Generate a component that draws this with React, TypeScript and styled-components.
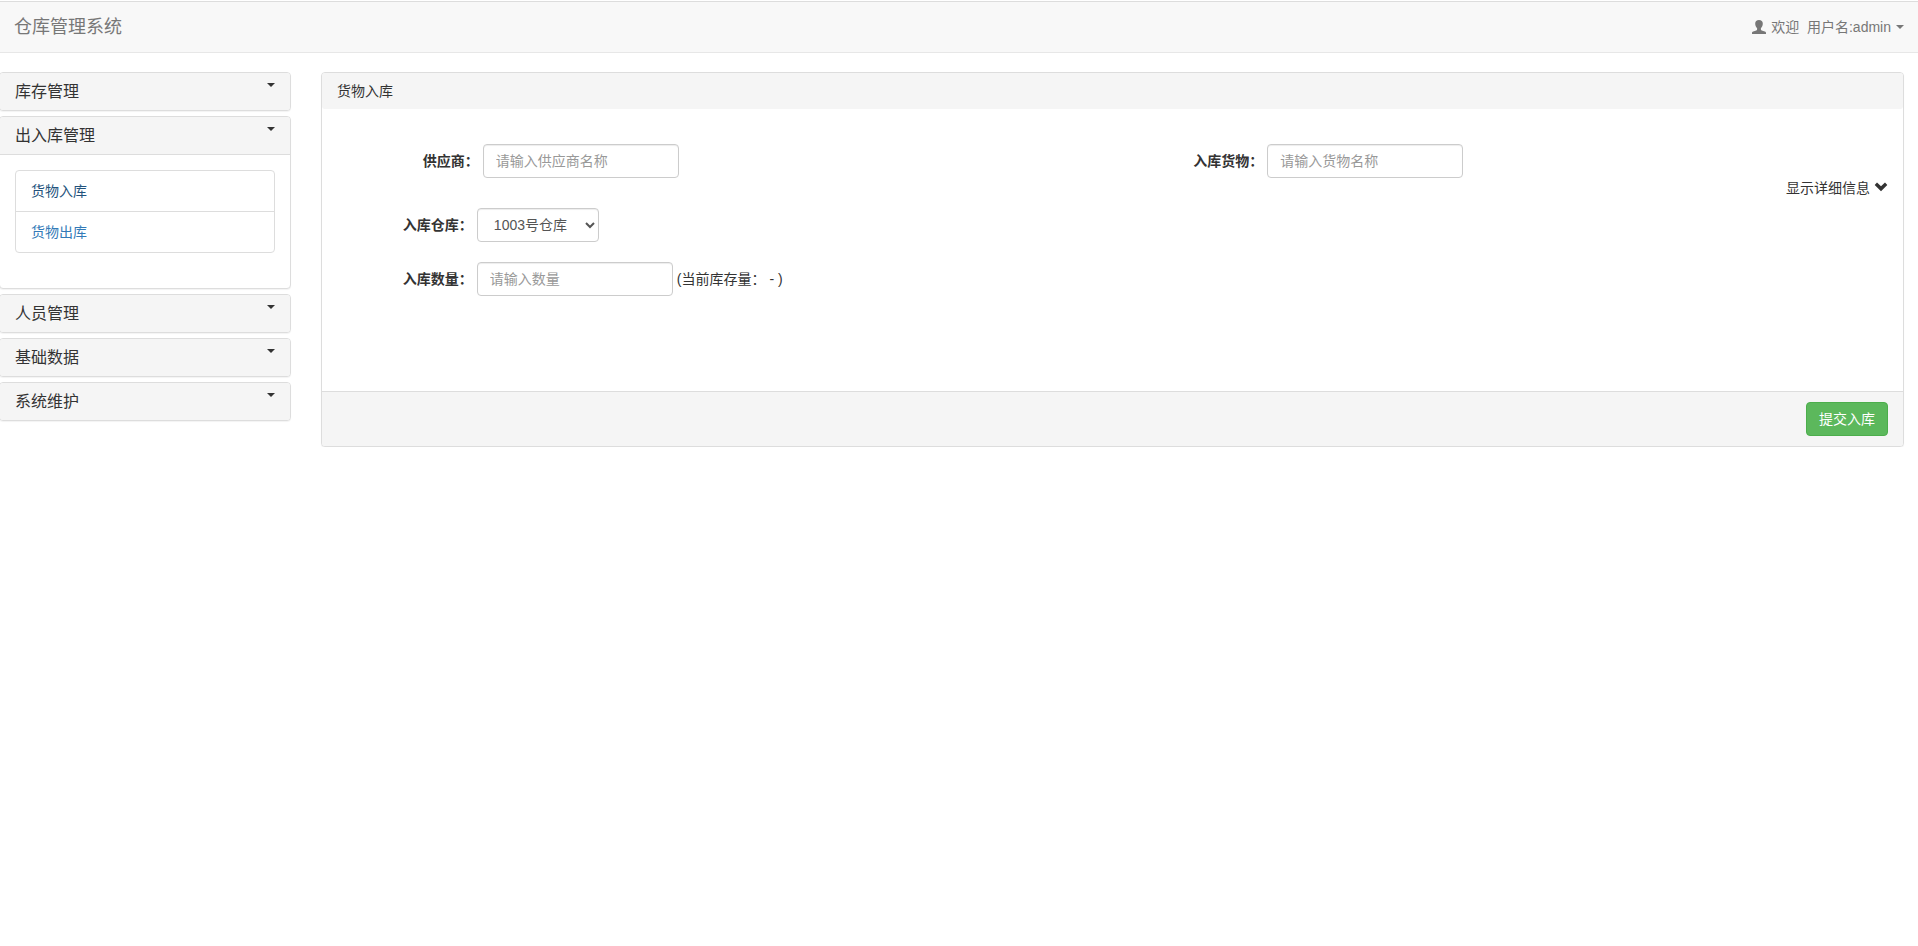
import React, { useState } from "react";
import styled, { createGlobalStyle } from "styled-components";

const GlobalStyle = createGlobalStyle`
  *, *::before, *::after { box-sizing: border-box; }
  body {
    margin: 0;
    background: #fff;
    color: #333;
    font-family: "Liberation Sans", "Noto Sans CJK SC", sans-serif;
    font-size: 14px;
    line-height: 20px;
  }
  button, input, select { font-family: inherit; font-size: 14px; line-height: 20px; }
`;

const Navbar = styled.header`
  display: flex;
  align-items: center;
  justify-content: space-between;
  height: 52px;
  margin: 1px 0 19px;
  padding: 0 14px;
  background: #f8f8f8;
  border-top: 1px solid #ddd;
  border-bottom: 1px solid #e7e7e7;
`;

const Brand = styled.a`
  color: #777;
  font-size: 18px;
  line-height: 20px;
  text-decoration: none;
`;

const UserMenu = styled.button`
  display: flex;
  align-items: center;
  gap: 5px;
  padding: 0;
  border: 0;
  background: none;
  color: #777;
  white-space: pre;
`;

const Caret = styled.span`
  flex: none;
  width: 8px;
  height: 4px;
  border-top: 4px solid currentColor;
  border-left: 4px solid transparent;
  border-right: 4px solid transparent;
`;

const Layout = styled.div`
  display: grid;
  grid-template-columns: minmax(0, 291fr) minmax(0, 1583fr);
  gap: 30px;
  align-items: start;
  padding-right: 14px;
`;

const Sidebar = styled.nav`
  display: flex;
  flex-direction: column;
  gap: 5px;
  margin-left: -1px;
`;

const Panel = styled.section`
  background: #fff;
  border: 1px solid #ddd;
  border-radius: 4px;
  box-shadow: 0 1px 1px rgba(0, 0, 0, 0.05);
`;

const GroupHeading = styled.button<{ $open: boolean }>`
  display: flex;
  align-items: flex-start;
  justify-content: space-between;
  width: 100%;
  padding: 10px 15px;
  border: 0;
  border-bottom: ${(p) => (p.$open ? "1px solid #ddd" : "0")};
  border-radius: ${(p) => (p.$open ? "3px 3px 0 0" : "3px")};
  background: #f5f5f5;
  color: #333;
`;

const GroupTitle = styled.span`
  font-size: 16px;
  line-height: 17px;
`;

const GroupBody = styled.div`
  padding: 15px 15px 35px;
`;

const MenuList = styled.ul`
  margin: 0;
  padding: 0;
  list-style: none;
  border: 1px solid #ddd;
  border-radius: 4px;
`;

const MenuItem = styled.li`
  & + & {
    border-top: 1px solid #ddd;
  }
`;

const MenuLink = styled.a<{ $active: boolean }>`
  display: block;
  padding: 10px 15px;
  color: ${(p) => (p.$active ? "#23527c" : "#337ab7")};
  text-decoration: none;
`;

const PanelHeading = styled.h1`
  margin: 0;
  padding: 8px 15px;
  border-radius: 3px;
  background: #f5f5f5;
  font-size: 14px;
  font-weight: 400;
  line-height: 20px;
`;

const FormBody = styled.div`
  padding: 35px 0 95px;
`;

const FieldRow = styled.div<{ $gap?: number }>`
  display: grid;
  grid-template-columns: 1fr 1fr;
  margin-bottom: ${(p) => p.$gap ?? 0}px;
`;

const Field = styled.div<{ $indent?: number }>`
  display: flex;
  align-items: center;
  gap: 4px;
  padding-left: calc(8.3333% + ${(p) => 15 + (p.$indent ?? 0)}px);
  white-space: pre;
`;

const Label = styled.label`
  font-weight: 700;
`;

const TextInput = styled.input`
  width: 196px;
  height: 34px;
  padding: 6px 12px;
  border: 1px solid #ccc;
  border-radius: 4px;
  background: #fff;
  color: #555;
  box-shadow: inset 0 1px 1px rgba(0, 0, 0, 0.075);
  &::placeholder {
    color: #999;
  }
`;

const Select = styled.select`
  width: 122px;
  height: 34px;
  padding: 6px 0 6px 12px;
  border: 1px solid #ccc;
  border-radius: 4px;
  background: #fff;
  color: #555;
  box-shadow: inset 0 1px 1px rgba(0, 0, 0, 0.075);
`;

const DetailRow = styled.div`
  display: flex;
  justify-content: flex-end;
  margin-bottom: 10px;
  padding-right: 15px;
`;

const DetailToggle = styled.button`
  display: flex;
  align-items: center;
  gap: 4px;
  padding: 0;
  border: 0;
  background: none;
  color: #333;
`;

const PanelFooter = styled.footer`
  display: flex;
  justify-content: flex-end;
  padding: 10px 15px;
  border-top: 1px solid #ddd;
  border-radius: 0 0 3px 3px;
  background: #f5f5f5;
`;

const SubmitButton = styled.button`
  padding: 6px 12px;
  border: 1px solid #4cae4c;
  border-radius: 4px;
  background: #5cb85c;
  color: #fff;
`;

const UserIcon = () => (
  <svg width="14" height="14" viewBox="0 0 14 14" fill="currentColor" aria-hidden="true">
    <path d="M7 0C4.600 0 3.200 1.400 3.200 3.600c0 2 .8 3.700 1.900 4.600v1.200c0 .5-.3.800-.8 1L1.200 11.400C.3 11.700 0 12.200 0 12.900V14h14v-1.100c0-.7-.3-1.200-1.200-1.500L9.700 10.400c-.5-.2-.8-.5-.8-1V8.200c1.100-.9 1.900-2.600 1.900-4.600C10.800 1.400 9.400 0 7 0z" />
  </svg>
);

const ChevronIcon = () => (
  <svg width="14" height="14" viewBox="0 0 14 14" fill="currentColor" aria-hidden="true">
    <path d="M3 1.500 7 5.300 11 1.500 13.300 3.900 7 10.200.7 3.900z" />
  </svg>
);

const groups = [
  { title: "库存管理", items: ["库存查询"] },
  { title: "出入库管理", items: ["货物入库", "货物出库"] },
  { title: "人员管理", items: ["仓库管理员管理"] },
  { title: "基础数据", items: ["供应商信息管理"] },
  { title: "系统维护", items: ["更改密码"] },
];

export default function App() {
  const [open, setOpen] = useState(1);
  const [active, setActive] = useState("货物入库");

  return (
    <>
      <GlobalStyle />
      <Navbar>
        <Brand href="#">仓库管理系统</Brand>
        <UserMenu type="button">
          <UserIcon />
          <span>{"欢迎  用户名:admin"}</span>
          <Caret />
        </UserMenu>
      </Navbar>
      <Layout>
        <Sidebar>
          {groups.map((group, i) => (
            <Panel key={group.title}>
              <GroupHeading type="button" $open={open === i} onClick={() => setOpen(open === i ? -1 : i)}>
                <GroupTitle>{group.title}</GroupTitle>
                <Caret />
              </GroupHeading>
              {open === i && (
                <GroupBody>
                  <MenuList>
                    {group.items.map((item) => (
                      <MenuItem key={item}>
                        <MenuLink href="#" $active={item === active} onClick={() => setActive(item)}>
                          {item}
                        </MenuLink>
                      </MenuItem>
                    ))}
                  </MenuList>
                </GroupBody>
              )}
            </Panel>
          ))}
        </Sidebar>
        <Panel as="main">
          <PanelHeading>货物入库</PanelHeading>
          <FormBody>
            <FieldRow>
              <Field $indent={20}>
                <Label htmlFor="supplier">供应商：</Label>
                <TextInput id="supplier" placeholder="请输入供应商名称" />
              </Field>
              <Field>
                <Label htmlFor="goods">入库货物：</Label>
                <TextInput id="goods" placeholder="请输入货物名称" />
              </Field>
            </FieldRow>
            <DetailRow>
              <DetailToggle type="button">
                <span>显示详细信息</span>
                <ChevronIcon />
              </DetailToggle>
            </DetailRow>
            <FieldRow $gap={20}>
              <Field>
                <Label htmlFor="warehouse">入库仓库：</Label>
                <Select id="warehouse">
                  <option>1003号仓库</option>
                </Select>
              </Field>
            </FieldRow>
            <FieldRow>
              <Field>
                <Label htmlFor="amount">入库数量：</Label>
                <TextInput id="amount" placeholder="请输入数量" />
                <span>{"(当前库存量： - )"}</span>
              </Field>
            </FieldRow>
          </FormBody>
          <PanelFooter>
            <SubmitButton type="button">提交入库</SubmitButton>
          </PanelFooter>
        </Panel>
      </Layout>
    </>
  );
}
